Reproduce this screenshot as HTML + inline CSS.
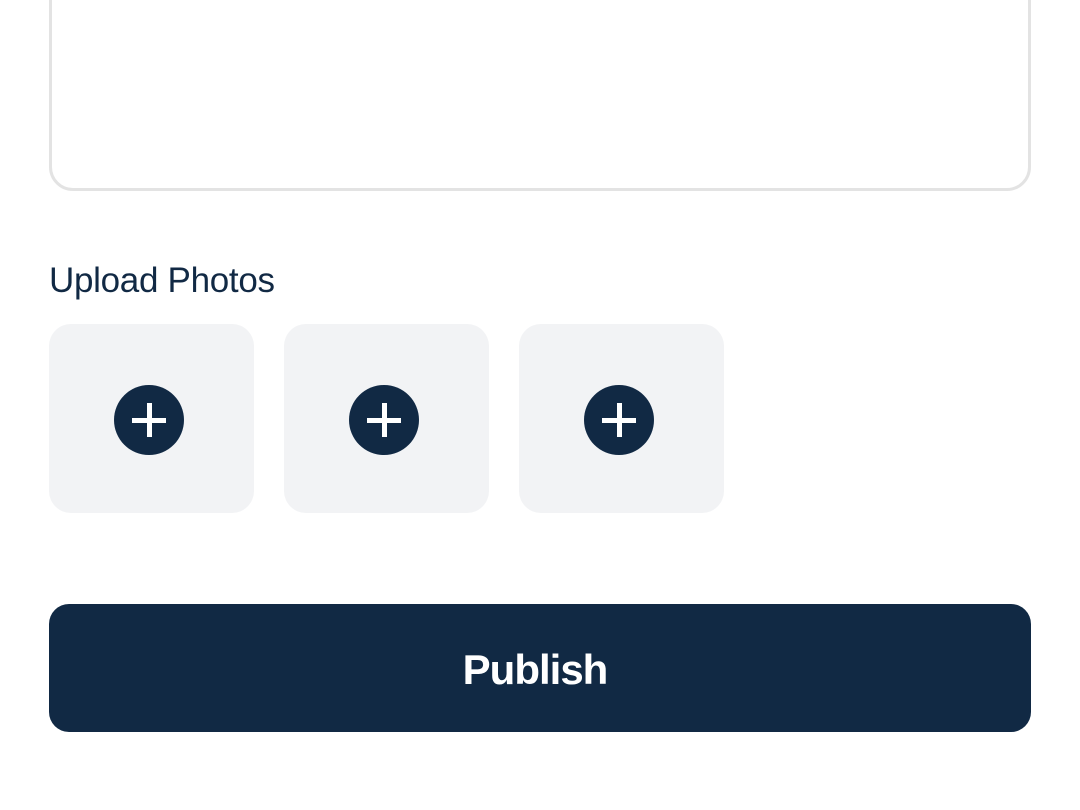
<!DOCTYPE html>
<html><head><style>
body{margin:0;width:1080px;height:810px;background:#fff;position:relative;overflow:hidden;font-family:"Liberation Sans",sans-serif}
.ta{position:absolute;left:49px;top:-40px;width:976px;height:225px;border:3px solid #e3e3e3;border-radius:24px}
.lbl{position:absolute;left:49px;top:261px;font-size:35px;color:#112944;letter-spacing:-0.3px}
.tile{position:absolute;top:324px;width:205px;height:189px;background:#f2f3f5;border-radius:22px}
.c{position:absolute;left:65px;top:61px;width:70px;height:70px;border-radius:50%;background:#112944}
.c:before{content:"";position:absolute;left:18px;top:32.5px;width:34px;height:5px;background:#fff}
.c:after{content:"";position:absolute;left:32.5px;top:18px;width:5px;height:34px;background:#fff}
.btn{position:absolute;left:49px;top:604px;width:982px;height:128px;background:#112944;border-radius:20px;color:#fff;font-size:42px;font-weight:bold;text-align:center;line-height:132px;letter-spacing:-1px;text-indent:-10px}
</style></head><body>
<div class="ta"></div>
<div class="lbl">Upload Photos</div>
<div class="tile" style="left:49px"><div class="c"></div></div>
<div class="tile" style="left:284px"><div class="c"></div></div>
<div class="tile" style="left:519px"><div class="c"></div></div>
<div class="btn">Publish</div>
</body></html>
